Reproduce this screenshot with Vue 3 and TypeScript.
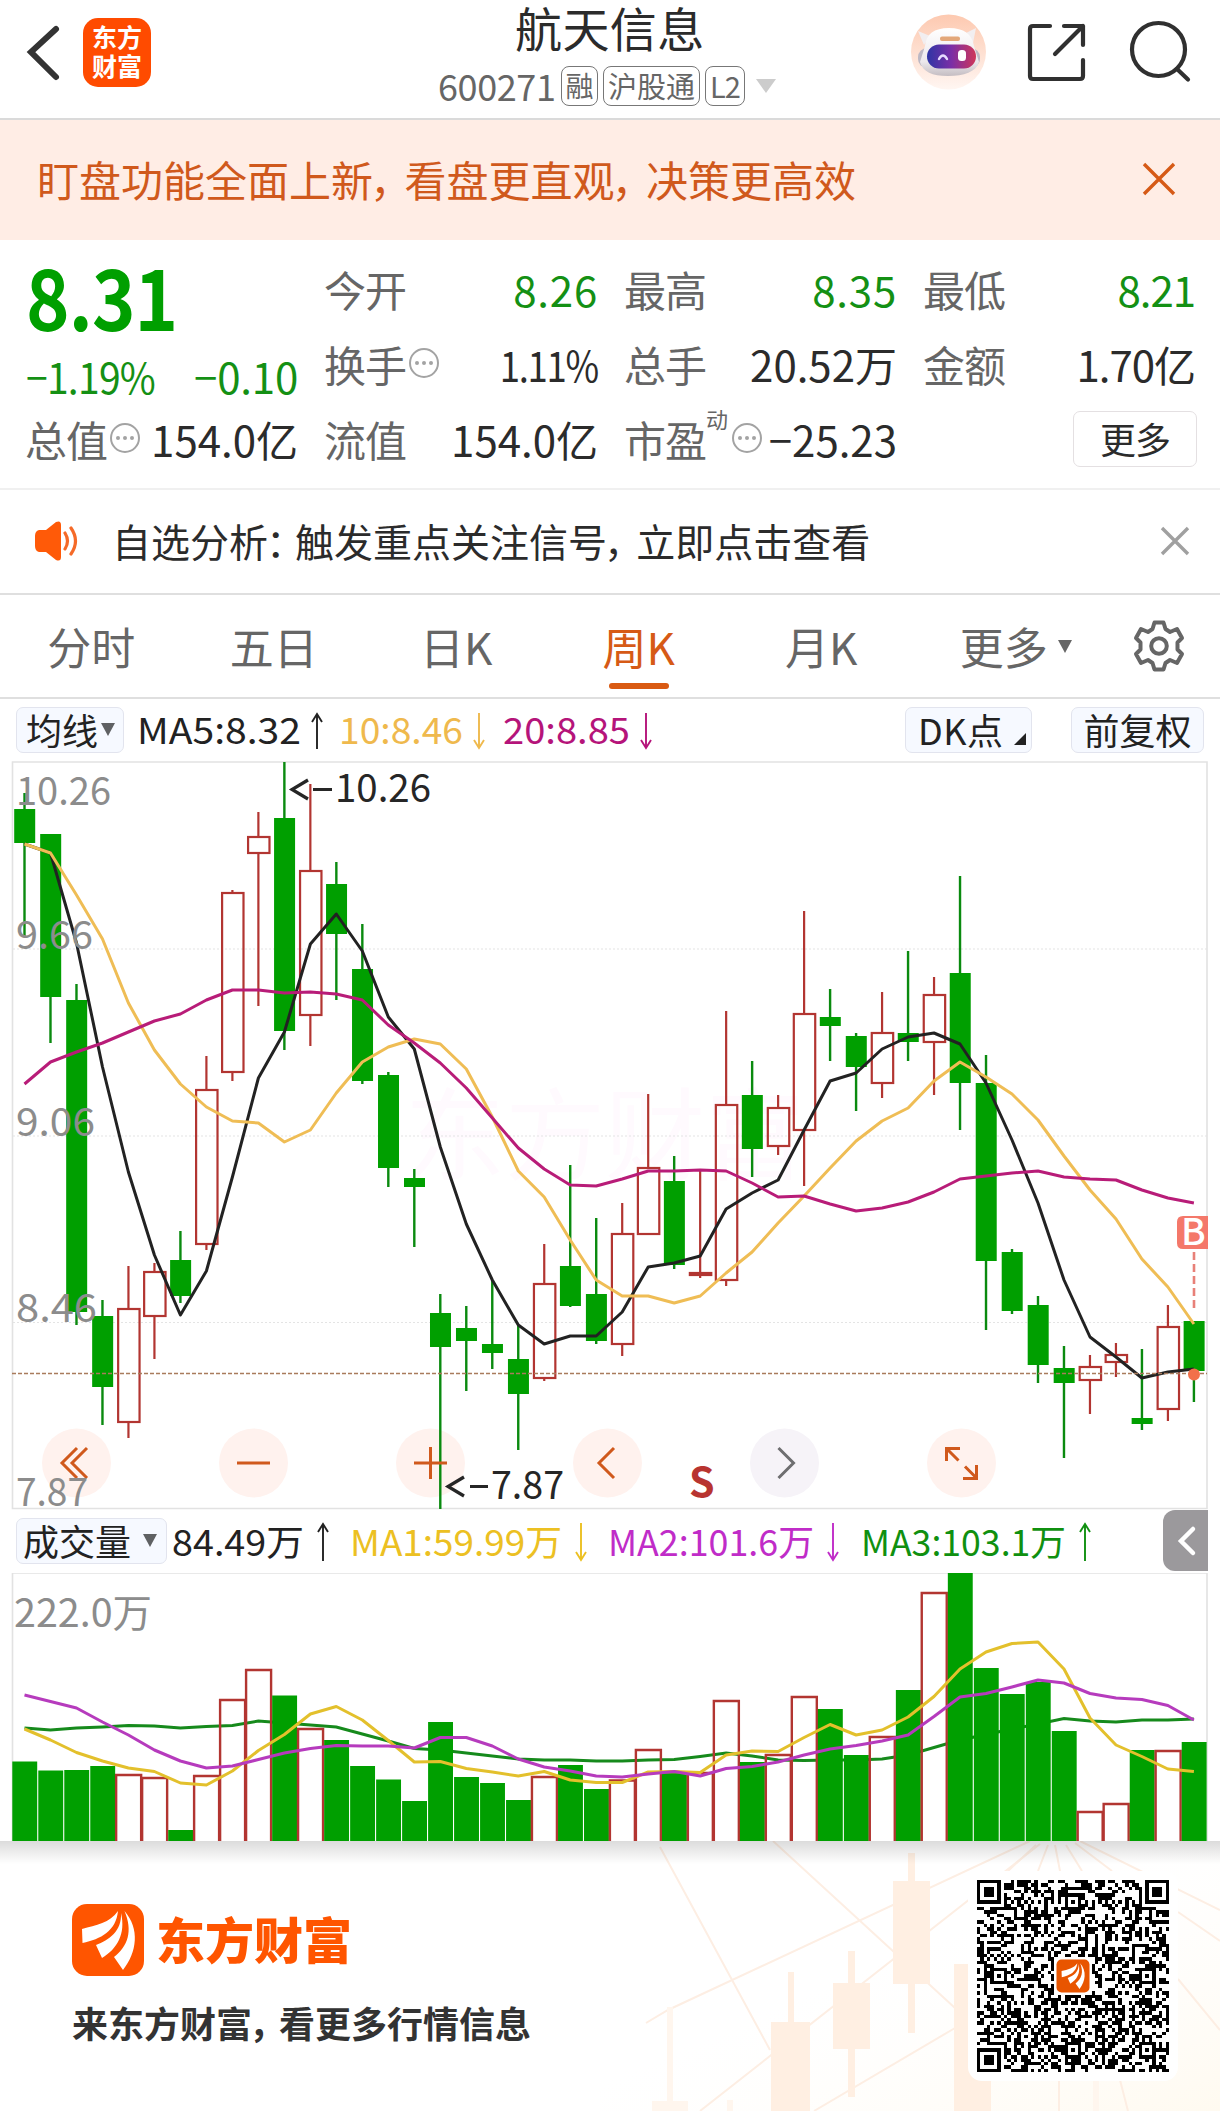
<script setup lang="ts">
/**
 * Stock detail page
 * Quote panel, weekly K-line chart and volume chart
 */

type Candle = [kind: "g" | "r", high: number, top: number, bottom: number, low: number];

interface Reading {
  text: string;
  color: string;
  width: number;
  textWidth: number;
  up: boolean;
}

const tabs = ["分时", "五日", "日K", "周K", "月K", "更多"];
const activeTab = "周K";

const STEP = 25.987;
const cx = (i: number) => 24.5 + i * STEP;

// high / body top / body bottom / low
const candles: Candle[] = [
  ["g", 793, 809, 843, 937], ["g", 834, 834, 997, 1043], ["g", 984, 1000, 1312, 1325],
  ["g", 1300, 1316, 1387, 1425], ["r", 1266, 1309, 1422, 1438], ["r", 1263, 1272, 1316, 1359],
  ["g", 1231, 1260, 1296, 1303], ["r", 1056, 1090, 1244, 1250], ["r", 890, 893, 1072, 1081],
  ["r", 812, 837, 853, 1006], ["g", 762, 818, 1031, 1050], ["r", 784, 871, 1015, 1046],
  ["g", 862, 884, 934, 1000], ["g", 924, 969, 1081, 1084], ["g", 1072, 1075, 1168, 1187],
  ["g", 1169, 1178, 1187, 1247], ["g", 1294, 1313, 1347, 1509], ["g", 1306, 1328, 1341, 1391],
  ["g", 1280, 1344, 1353, 1369], ["g", 1326, 1359, 1394, 1450], ["r", 1244, 1284, 1378, 1381],
  ["g", 1165, 1266, 1306, 1307], ["g", 1218, 1294, 1341, 1344], ["r", 1203, 1234, 1344, 1356],
  ["r", 1094, 1168, 1234, 1234], ["g", 1156, 1181, 1265, 1269], ["r", 1171, 1273, 1275, 1278],
  ["r", 1011, 1105, 1280, 1286], ["g", 1061, 1095, 1149, 1177], ["r", 1095, 1108, 1146, 1155],
  ["r", 911, 1014, 1130, 1186], ["g", 989, 1017, 1026, 1061], ["g", 1033, 1036, 1067, 1111],
  ["r", 992, 1033, 1083, 1098], ["g", 951, 1033, 1042, 1061], ["r", 977, 995, 1042, 1095],
  ["g", 876, 973, 1083, 1130], ["g", 1055, 1083, 1261, 1330], ["g", 1249, 1252, 1311, 1314],
  ["g", 1296, 1305, 1365, 1383], ["g", 1346, 1368, 1383, 1458], ["r", 1355, 1367, 1380, 1414],
  ["r", 1343, 1355, 1362, 1377], ["g", 1349, 1418, 1424, 1430], ["r", 1305, 1327, 1409, 1421],
  ["g", 1321, 1321, 1371, 1402]
];

const volumes = [
  1761.5, 1770.5, 1770, 1766, 1775, 1778, 1830, 1776, 1700, 1670, 1695.5, 1729, 1740, 1766, 1779.5,
  1801, 1722, 1777, 1783, 1800, 1777, 1765, 1789, 1780.5, 1750, 1772.5, 1773, 1701, 1762, 1755,
  1697, 1709, 1755, 1737, 1690, 1593, 1573, 1668, 1694, 1682, 1731, 1812, 1804, 1750, 1751, 1742
];

const ma5 = [
  844, 853, 943, 1067, 1172, 1255, 1315, 1271, 1177, 1078, 1032, 944, 914, 951, 1017, 1049, 1147,
  1224, 1280, 1325, 1344, 1336, 1336, 1312, 1267, 1263, 1256, 1209, 1193, 1180, 1130, 1081, 1073,
  1049, 1037, 1033, 1044, 1083, 1140, 1203, 1280, 1337, 1357, 1378, 1372, 1369
];
const ma10 = [
  844, 853, 895, 939, 1003, 1050, 1084, 1107, 1121, 1123, 1142, 1130, 1093, 1062, 1047, 1039, 1044,
  1069, 1117, 1171, 1197, 1240, 1280, 1296, 1296, 1303, 1296, 1273, 1252, 1223, 1196, 1168, 1141,
  1121, 1108, 1081, 1062, 1077, 1094, 1120, 1156, 1190, 1219, 1259, 1287, 1324
];
const ma20 = [
  1084, 1062, 1052, 1043, 1032, 1021, 1014, 1000, 990, 990, 993, 992, 994, 1000, 1025, 1043, 1063,
  1088, 1118, 1148, 1169, 1185, 1186, 1179, 1171, 1171, 1170, 1171, 1183, 1197, 1196, 1204, 1211,
  1208, 1202, 1192, 1179, 1176, 1173, 1171, 1177, 1179, 1180, 1190, 1198, 1203
];
const vol1 = [
  1729, 1740, 1752.5, 1761, 1768, 1771.5, 1783, 1785, 1771, 1750.5, 1734.5, 1714, 1706.5, 1720,
  1740.5, 1762, 1761.5, 1768.5, 1772, 1776, 1771.5, 1780, 1782.5, 1782.5, 1772, 1771.5, 1772.5,
  1755, 1751, 1751.5, 1737.5, 1724.5, 1735, 1730, 1717, 1696.5, 1669, 1652, 1643.5, 1642, 1669,
  1718, 1745, 1756.5, 1769, 1771.5
];
const vol2 = [
  1695, 1701.5, 1708, 1722, 1735, 1750, 1761, 1768, 1766, 1759.5, 1753, 1748.5, 1745.5, 1746, 1746,
  1748, 1737.5, 1737.5, 1746, 1759, 1767, 1771, 1776, 1777, 1774, 1771.5, 1776, 1768.5, 1766.5,
  1762, 1755, 1749, 1745.5, 1741, 1735, 1716.5, 1697, 1693.5, 1687, 1680, 1683, 1693.5, 1698,
  1699.5, 1705.5, 1720
];
const vol3 = [
  1728, 1730, 1728, 1727, 1725.5, 1726, 1728, 1726.5, 1725.5, 1721, 1723, 1725, 1727, 1734, 1741,
  1748.5, 1750, 1753, 1756, 1759, 1760, 1760, 1761, 1761, 1760, 1759.5, 1756.5, 1753, 1756, 1760,
  1760.5, 1760, 1760, 1759, 1755, 1747.5, 1740, 1734.5, 1729, 1724, 1718.5, 1721, 1722, 1720, 1720,
  1719
];

const toPoints = (ys: number[]) => ys.map((y, i) => `${cx(i).toFixed(1)},${y}`).join(" ");

const priceLines = [
  { points: toPoints(ma5), color: "#222222" },
  { points: toPoints(ma10), color: "#efbd55" },
  { points: toPoints(ma20), color: "#b81c78" }
];
// the long average is partly covered by the bars
const volumeLines = [
  { points: toPoints(vol1), color: "#e3c02c" },
  { points: toPoints(vol2), color: "#b63bbd" }
];
const longVolumeLine = toPoints(vol3);

const axisLabels = [
  { text: "10.26", y: 805, width: 92 },
  { text: "9.66", y: 949, width: 74 },
  { text: "9.06", y: 1136, width: 76 },
  { text: "8.46", y: 1322, width: 78 },
  { text: "7.87", y: 1506, width: 69 }
];

const priceReadings: Reading[] = [
  { text: "MA5:8.32", color: "#222222", width: 202, textWidth: 164, up: true },
  { text: "10:8.46", color: "#efb94d", width: 164, textWidth: 124, up: false },
  { text: "20:8.85", color: "#b5147a", width: 165, textWidth: 127, up: false }
];
const volumeReadings: Reading[] = [
  { text: "84.49万", color: "#222222", width: 178, textWidth: 132, up: true },
  { text: "MA1:59.99万", color: "#ecc022", width: 258, textWidth: 212, up: false },
  { text: "MA2:101.6万", color: "#c02cc8", width: 253, textWidth: 206, up: false },
  { text: "MA3:103.1万", color: "#109010", width: 240, textWidth: 205, up: true }
];

// QR code modules
const QR = 57;
const inFinder = (r: number, c: number) =>
  (r < 8 && c < 8) || (r < 8 && c > QR - 9) || (r > QR - 9 && c < 8);
const ring = (r: number, c: number, r0: number, c0: number, size: number) => {
  const d = Math.max(Math.abs(r - r0), Math.abs(c - c0));
  return size === 7 ? d === 3 || d <= 1 : d === 2 || d === 0;
};
const buildQr = () => {
  let seed = 60027;
  let path = "";
  const aligns = [6, 28, 50];
  for (let r = 0; r < QR; r++) {
    for (let c = 0; c < QR; c++) {
      seed = (seed * 1103515245 + 12345) % 2147483648;
      let on = seed / 2147483648 < 0.5;
      if (r === 6 || c === 6) on = (r + c) % 2 === 0;
      for (const ar of aligns) {
        for (const ac of aligns) {
          if (Math.abs(r - ar) <= 2 && Math.abs(c - ac) <= 2) on = ring(r, c, ar, ac, 5);
        }
      }
      if (inFinder(r, c)) {
        const r0 = r < 8 ? 3 : QR - 4;
        const c0 = c < 8 ? 3 : QR - 4;
        on = Math.abs(r - r0) <= 3 && Math.abs(c - c0) <= 3 && ring(r, c, r0, c0, 7);
      }
      if (Math.abs(r - 28) <= 5 && Math.abs(c - 28) <= 5) on = false;
      if (on) path += `M${c} ${r}h1v1h-1z`;
    }
  }
  return path;
};
const qrPath = buildQr();

const feathers =
  "M46 7C38 19 24 21 10 25L10.500 39C29 35 44 27 46 7Z M49 9C50 27 37 36 24 41L30 54C45 45 54 30 49 9Z M52.500 7C68 25 65 48 51 66L42 53C56 42 61 27 52.500 7Z";
</script>

<template>
  <div class="page">
    <header class="top-bar">
      <svg class="back" width="83" height="119" viewBox="0 0 83 119">
        <path d="M56 29 L31 52 L56 77" fill="none" stroke="#333" stroke-width="6" stroke-linecap="round" />
      </svg>
      <div class="app-mark"><span>东方</span><span>财富</span></div>
      <div class="stock">
        <div class="stock-name">航天信息</div>
        <div class="stock-sub">
          <span class="code">600271</span>
          <span class="badge rong">融</span>
          <span class="badge hgt">沪股通</span>
          <span class="badge l2">L2</span>
          <i class="caret"></i>
        </div>
      </div>
      <svg class="tools" width="310" height="119" viewBox="910 0 310 119">
        <defs>
          <linearGradient id="halo" x1="0" y1="0" x2="0" y2="1">
            <stop offset="0" stop-color="#fdc9b0" /><stop offset="1" stop-color="#fff6f2" />
          </linearGradient>
          <linearGradient id="visor" x1="0" y1="0" x2="1" y2="0">
            <stop offset="0" stop-color="#2e35a5" /><stop offset=".5" stop-color="#7b2fa6" /><stop offset="1" stop-color="#cf3659" />
          </linearGradient>
          <linearGradient id="shell" x1="0" y1="0" x2="0" y2="1">
            <stop offset="0" stop-color="#fff" /><stop offset=".7" stop-color="#ece8ec" /><stop offset="1" stop-color="#c4bdc2" />
          </linearGradient>
        </defs>
        <circle cx="948.500" cy="52" r="37.500" fill="url(#halo)" />
        <path d="M918 31l12 5-6 9zM976 28l-12 6 9 9z" fill="#f2eef0" />
        <rect x="918" y="48" width="62" height="20" rx="9" fill="#bdb8c4" />
        <path d="M925 46C926 34 934 28 949 28S972 34 974 46L979 62C976 72 964 76 948 76S923 72 920 62Z" fill="url(#shell)" />
        <rect x="940" y="36.500" width="20" height="4.500" rx="2" fill="#e3a779" />
        <rect x="927" y="44.500" width="49" height="24" rx="12" fill="url(#visor)" />
        <path d="M939 59q4-7 8 0" fill="none" stroke="#e8dcff" stroke-width="2.400" stroke-linecap="round" />
        <rect x="958" y="50" width="8" height="11" rx="3.500" fill="#fff" />
        <g fill="none" stroke="#303030" stroke-width="4.200" stroke-linecap="round" stroke-linejoin="round">
          <path d="M1050 26H1033q-3 0-3 3V76q0 3 3 3H1080q3 0 3-3V60M1064 26H1083V45M1083 26L1055 54" />
          <circle cx="1158.500" cy="49.500" r="26.500" />
          <path d="M1177 69L1188 79.500" />
        </g>
      </svg>
    </header>

    <section class="promo">
      <span>盯盘功能全面上新<i class="comma">，</i>看盘更直观<i class="comma">，</i>决策更高效</span>
      <svg width="34" height="34" viewBox="0 0 34 34">
        <path d="M2 2L32 32M32 2L2 32" stroke="#d65a16" stroke-width="3.400" />
      </svg>
    </section>

    <section class="quote">
      <div class="col first">
        <div class="price"><span>8.31</span></div>
        <div class="line change"><span class="pct">−1.19%</span><span class="diff">−0.10</span></div>
        <div class="line">
          <span class="label">总值</span><span class="dots"><i></i><i></i><i></i></span><b>154.0亿</b>
        </div>
      </div>
      <div class="col">
        <div class="line"><span class="label">今开</span><b class="down">8.26</b></div>
        <div class="line">
          <span class="label">换手</span><span class="dots"><i></i><i></i><i></i></span><b class="ones">1.11%</b>
        </div>
        <div class="line"><span class="label">流值</span><b>154.0亿</b></div>
      </div>
      <div class="col">
        <div class="line"><span class="label">最高</span><b class="down">8.35</b></div>
        <div class="line"><span class="label">总手</span><b>20.52万</b></div>
        <div class="line">
          <span class="label">市盈<sup>动</sup></span><span class="dots pe"><i></i><i></i><i></i></span><b>−25.23</b>
        </div>
      </div>
      <div class="col">
        <div class="line"><span class="label">最低</span><b class="down low">8.21</b></div>
        <div class="line"><span class="label">金额</span><b class="amount">1.70亿</b></div>
        <div class="line end"><button class="more">更多</button></div>
      </div>
    </section>

    <section class="notice">
      <svg class="horn" width="46" height="42" viewBox="0 0 46 42">
        <path d="M5 10H12L22 2Q27 0 27 5V37Q27 42 22 40L12 32H5Q1 31 1 26V16Q1 11 5 10Z" fill="#ff5a08" />
        <path d="M31 13q5 8 0 16M37 8q9 13 0 26" fill="none" stroke="#f56a28" stroke-width="3.200" stroke-linecap="round" />
      </svg>
      <span>自选分析<i class="colon">：</i>触发重点关注信号<i class="comma">，</i>立即点击查看</span>
      <svg class="close" width="30" height="30" viewBox="0 0 30 30">
        <path d="M2 2L28 28M28 2L2 28" stroke="#a0a0a0" stroke-width="3.400" />
      </svg>
    </section>

    <nav class="tabs">
      <div v-for="tab in tabs" :key="tab" class="tab" :class="{ active: tab === activeTab }">
        {{ tab }}<i v-if="tab === '更多'" class="caret"></i>
      </div>
      <svg class="gear" width="56" height="64" viewBox="-28 -32 56 64">
        <g fill="none" stroke="#666" stroke-width="4" stroke-linejoin="round">
          <path d="M-4.500 -23.500H4.500L6.500 -17L11 -14L18 -17L23 -8L18.500 -3.500V3.500L23 8L18 17L11 14L6.500 17L4.500 23.500H-4.500L-6.500 17L-11 14L-18 17L-23 8L-18.500 3.500V-3.500L-23 -8L-18 -17L-11 -14L-6.500 -17Z" />
          <circle r="7.800" />
        </g>
      </svg>
    </nav>

    <div class="readings">
      <div class="chip avg">均线<i class="caret"></i></div>
      <div v-for="item in priceReadings" :key="item.text" class="reading" :style="{ width: item.width + 'px' }">
        <svg :width="item.width" height="50">
          <text x="-1" y="37" :textLength="item.textWidth" lengthAdjust="spacingAndGlyphs" :fill="item.color">{{ item.text }}</text>
          <path :d="item.up ? 'M-5 12L0 4L5 12M0 4V39' : 'M-5 30L0 38L5 30M0 3V38'" :transform="`translate(${item.textWidth + 15} 3)`" fill="none" :stroke="item.color" stroke-width="1.900" />
        </svg>
      </div>
      <div class="chip dk">DK点<i class="corner"></i></div>
      <div class="chip fq">前复权</div>
    </div>

    <svg class="chart" width="1220" height="749" viewBox="0 761 1220 749">
      <text class="watermark" x="405" y="1172" textLength="400">东方财富</text>
      <g stroke="#e4e4e4" stroke-width="1.200" stroke-dasharray="2 2">
        <path d="M13 949H1207M13 1136H1207M13 1322.500H1207" />
      </g>
      <path d="M12.500 762H1207V1508.500H12.500Z" fill="none" stroke="#e2e2e2" stroke-width="1.600" />

      <g fill="#fff2ee">
        <circle cx="76.500" cy="1463" r="34.500" />
        <circle cx="253.500" cy="1463" r="34.500" />
        <circle cx="430.500" cy="1463" r="34.500" />
        <circle cx="607.500" cy="1463" r="34.500" />
        <circle cx="784.500" cy="1463" r="34.500" fill="#f6f3f8" />
        <circle cx="961.500" cy="1463" r="34.500" />
      </g>

      <g v-for="([kind, high, top, bottom, low], i) in candles" :key="i">
        <template v-if="kind === 'g'">
          <rect :x="cx(i) - 1.2" :y="high" width="2.400" :height="low - high" fill="#0a8a0f" />
          <rect :x="cx(i) - 10.300" :y="top" width="21" :height="bottom - top" fill="#009f00" />
        </template>
        <template v-else>
          <path :d="`M${cx(i)} ${high}V${top}M${cx(i)} ${bottom}V${low}`" stroke="#b23531" stroke-width="2.200" />
          <rect :x="cx(i) - 10.300" :y="top" width="21.400" :height="bottom - top" fill="none" stroke="#b23531" stroke-width="2.200" />
        </template>
      </g>

      <polyline v-for="line in priceLines" :key="line.color" :points="line.points" fill="none" :stroke="line.color" stroke-width="3" stroke-linejoin="round" />
      <path d="M12 1373.500H1207" stroke="#a97b5c" stroke-width="1.400" stroke-dasharray="4 2" />

      <g fill="none" stroke="#d0591c" stroke-width="3">
        <path d="M77 1448L62 1463L77 1478M87 1448L72 1463L87 1478" />
        <path d="M237 1463H270M414 1463H447M430.500 1447V1479" />
        <path d="M614 1448L599 1463L614 1478" />
        <path d="M778.500 1448L793.500 1463L778.500 1478" stroke="#6e6e70" />
        <path d="M946.500 1461V1448.500H960M947 1449L958.500 1460.500M965 1466.500L976.500 1478M963 1478.500H976.500V1465" />
      </g>

      <g fill="#8c8c8c" font-size="39">
        <text v-for="label in axisLabels" :key="label.text" x="16" :y="label.y" :textLength="label.width + 3" lengthAdjust="spacingAndGlyphs">{{ label.text }}</text>
      </g>
      <g fill="#262626" font-size="39">
        <text x="335" y="802" textLength="96" lengthAdjust="spacingAndGlyphs">10.26</text>
        <text x="491" y="1499" textLength="73" lengthAdjust="spacingAndGlyphs">7.87</text>
      </g>
      <path d="M308 780L292 789.500L308 799M313 789.500H332M464 1477L448 1486.500L464 1496M470 1486.500H488" fill="none" stroke="#262626" stroke-width="3.200" />

      <text class="sell" x="689" y="1497">S</text>
      <path d="M1208 1216H1183q-6 0-6 6v21q0 6 6 6h25z" fill="#f4786a" />
      <text class="buy" x="1181" y="1245">B</text>
      <path d="M1194 1252V1309" stroke="#e88078" stroke-width="2.600" stroke-dasharray="8 4" />
      <circle cx="1194" cy="1374.500" r="6" fill="#f2704a" />
    </svg>

    <div class="readings volume">
      <div class="chip vol">成交量<i class="caret"></i></div>
      <div v-for="item in volumeReadings" :key="item.text" class="reading" :style="{ width: item.width + 'px' }">
        <svg :width="item.width" height="50">
          <text x="-1" y="38" :textLength="item.textWidth" lengthAdjust="spacingAndGlyphs" :fill="item.color">{{ item.text }}</text>
          <path :d="item.up ? 'M-5 12L0 4L5 12M0 4V41' : 'M-5 32L0 40L5 32M0 3V40'" :transform="`translate(${item.textWidth + 18} 2)`" fill="none" :stroke="item.color" stroke-width="1.900" />
        </svg>
      </div>
      <div class="drawer">
        <svg width="44" height="61" viewBox="0 0 44 61">
          <path d="M30 19L18 31L30 43" fill="none" stroke="#fff" stroke-width="4.500" stroke-linecap="round" />
        </svg>
      </div>
    </div>

    <svg class="chart" width="1220" height="268" viewBox="0 1573 1220 268">
      <path d="M12.500 1841V1573H1207V1841" fill="none" stroke="#e2e2e2" stroke-width="1.600" />
      <text x="14" y="1627" font-size="39" fill="#8c8c8c" textLength="138" lengthAdjust="spacingAndGlyphs">222.0万</text>
      <polyline :points="longVolumeLine" fill="none" stroke="#168a1c" stroke-width="3" />
      <template v-for="(top, i) in volumes" :key="i">
        <rect v-if="candles[i][0] === 'g'" :x="cx(i) - 12.2" :y="top" width="24.900" :height="1841 - top" fill="#009f00" />
        <path v-else :d="`M${cx(i) - 12.3} 1841V${top}H${cx(i) + 12.7}V1841`" fill="none" stroke="#b23531" stroke-width="2.400" />
      </template>
      <polyline v-for="line in volumeLines" :key="line.color" :points="line.points" fill="none" :stroke="line.color" stroke-width="3" stroke-linejoin="round" />
    </svg>

    <footer class="brand">
      <svg class="brand-bg" width="1220" height="270" viewBox="0 1841 1220 270">
        <defs>
          <linearGradient id="warm" x1="0" y1="0" x2="1" y2="1">
            <stop offset=".45" stop-color="#fffdfa" stop-opacity="0" /><stop offset="1" stop-color="#fffaf0" />
          </linearGradient>
          <linearGradient id="shade" x1="0" y1="0" x2="0" y2="1">
            <stop offset="0" stop-color="#000" stop-opacity=".14" /><stop offset="1" stop-color="#000" stop-opacity="0" />
          </linearGradient>
        </defs>
        <rect x="600" y="1841" width="620" height="270" fill="url(#warm)" />
        <g fill="none" stroke="#fdeee3" stroke-width="2">
          <path d="M660 1847L770 2050M773 1841L955 2008M1030 1841L668 2010L646 2023M1040 1844L700 2111M814 2111L955 2028" />
          <path d="M1036 1845L1008 1871M1048 1845L1038 1871M1055 1845L1060 1871M1066 1845L1082 1871M1075 1843L1112 1871M1080 1841L1220 1910M1178 1912L1220 1941M1178 1979L1220 2030M1059 2080V2111M1120 2080L1128 2111" />
        </g>
        <g fill="#ffefe2">
          <path d="M893 1881h37v103h-37zM908 1853h7v28h-7zM908 1984h7v49h-7zM833 1983h37v66h-37zM848 1951h7v32h-7zM848 2049h7v48h-7zM771 2022h39v89h-39zM788 1972h6v50h-6zM954 1964h37v147h-37z" />
          <path d="M652 2101h36v10h-36zM667 2007h6v94h-6zM727 2100h6v11h-6zM1093 2080h6v31h-6z" fill="#fff6ee" />
        </g>
        <rect x="0" y="1841" width="1220" height="23" fill="url(#shade)" />
      </svg>
      <div class="brand-text">
        <div class="brand-name">
          <svg width="72" height="72" viewBox="0 0 72 72">
            <rect width="72" height="72" rx="15" fill="#ff5500" />
            <path :d="feathers" fill="#fff" />
          </svg>
          <span>东方财富</span>
        </div>
        <div class="slogan">来东方财富<i class="comma">，</i>看更多行情信息</div>
      </div>
      <div class="qr">
        <svg width="192" height="192" viewBox="0 0 57 57">
          <path :d="qrPath" shape-rendering="crispEdges" />
          <rect x="23.600" y="23.600" width="9.800" height="9.800" rx="1.500" fill="#e85500" />
          <path :d="feathers" fill="#fff" transform="translate(23.800 23.800) scale(.13)" />
        </svg>
      </div>
    </footer>
  </div>
</template>

<style>
body {
  margin: 0;
  background: #fff;
}
</style>

<style scoped>
.page {
  width: 1220px;
  height: 2111px;
  overflow: hidden;
  background: #fff;
  color: #2b2b2b;
  font-family: "Noto Sans CJK SC", "Noto Sans", sans-serif;
}

.page * {
  box-sizing: border-box;
}

svg {
  display: block;
  flex: none;
}

i {
  font-style: normal;
}

.caret {
  width: 0;
  height: 0;
  border: solid transparent;
  border-width: 14px 10.5px 0;
  border-top-color: #ccc;
}

/* header */
.top-bar {
  height: 120px;
  display: flex;
  border-bottom: 2px solid #dadada;
}

.app-mark {
  width: 68px;
  height: 69px;
  margin-top: 18px;
  padding-bottom: 3px;
  display: flex;
  flex-direction: column;
  align-items: center;
  justify-content: center;
  border-radius: 15px;
  background: #ff4b00;
  color: #fff;
  font-size: 25px;
  font-weight: 700;
  line-height: 29px;
}

.stock {
  width: 759px;
  padding-left: 287px;
}

.stock-name {
  padding-left: 77px;
  height: 62px;
  font-size: 47px;
  line-height: 53px;
  letter-spacing: 0.4px;
}

.stock-sub {
  display: flex;
  align-items: center;
  height: 48px;
  color: #666;
}

.code {
  width: 123px;
  font-size: 36px;
  line-height: 46px;
  letter-spacing: -0.4px;
  margin-top: -2px;
}

.badge {
  height: 40px;
  margin-right: 5px;
  border: 1.5px solid #777;
  border-radius: 8px;
  font-size: 29px;
  line-height: 36px;
  text-align: center;
  white-space: nowrap;
}

.rong {
  width: 37px;
  font-size: 28px;
}

.hgt {
  width: 97px;
}

.l2 {
  width: 40px;
  letter-spacing: -1px;
}

.stock-sub .caret {
  margin-left: 6px;
}

/* promo banner */
.promo {
  height: 120px;
  padding: 0 44px 3px 37px;
  display: flex;
  align-items: center;
  justify-content: space-between;
  background: #ffede5;
  color: #d0591c;
  font-size: 42px;
}

.comma {
  position: relative;
  left: -3px;
  letter-spacing: -0.25em;
}

/* quote */
.quote {
  height: 250px;
  padding: 11px 25px 0 26px;
  display: grid;
  grid-template-columns: 272px 273px 272px 271px;
  column-gap: 27px;
  border-bottom: 2px solid #f0f0f0;
}

.line {
  height: 75px;
  display: flex;
  align-items: center;
  font-size: 42px;
  white-space: nowrap;
}

.line b {
  margin-left: auto;
  font-weight: 400;
}

.label {
  position: relative;
  left: -1px;
  color: #666;
  letter-spacing: -1px;
}

.line .down {
  color: #149014;
  letter-spacing: 0.8px;
}

.line .low {
  letter-spacing: -1px;
}

.line .ones {
  letter-spacing: -1.5px;
  transform: scaleX(0.87);
  transform-origin: 100% 0;
}

.line .amount {
  letter-spacing: -1px;
}

.price {
  height: 75px;
  color: #009f00;
  font-size: 84px;
  font-weight: 700;
  line-height: 88px;
  letter-spacing: -1px;
}

.price span {
  display: inline-block;
  transform: scaleX(0.88);
  transform-origin: 0 0;
}

.change {
  padding-top: 23px;
  justify-content: space-between;
  color: #149014;
}

.pct {
  letter-spacing: -0.8px;
  transform: scaleX(0.93);
  transform-origin: 0 0;
}

.diff {
  letter-spacing: -0.2px;
}

.dots {
  width: 30px;
  height: 30px;
  margin: -2px 0 0 2px;
  display: flex;
  align-items: center;
  justify-content: center;
  gap: 3px;
  border: 2.4px solid #a3a3a3;
  border-radius: 50%;
}

.dots i {
  width: 4px;
  height: 4px;
  border-radius: 50%;
  background: #a3a3a3;
}

.pe {
  margin-left: 25px;
}

sup {
  position: absolute;
  left: 82px;
  top: -1px;
  font-size: 22px;
  line-height: 1;
}

.end {
  justify-content: flex-end;
}

.more {
  width: 124px;
  height: 56px;
  margin: 1px -2px 0 0;
  padding: 0 0 2px;
  border: 1.5px solid #e4e0e2;
  border-radius: 7px;
  background: #fff;
  color: #2b2b2b;
  font: inherit;
  font-size: 36px;
  line-height: 50px;
  letter-spacing: -1px;
}

/* notice */
.notice {
  height: 105px;
  padding-left: 34px;
  display: flex;
  align-items: center;
  border-bottom: 2px solid #dfdfdf;
  font-size: 39px;
}

.horn {
  margin-top: -2px;
}

.notice span {
  margin: -4px 0 0 32px;
}

.notice .colon {
  position: relative;
  left: -2px;
  letter-spacing: -12px;
}

.close {
  margin: -2px 30px 0 auto;
}

/* tabs */
.tabs {
  height: 104px;
  display: flex;
  align-items: center;
  border-bottom: 2px solid #dfdfdf;
  color: #666;
}

.tab {
  position: relative;
  width: 182.5px;
  height: 102px;
  font-size: 44px;
  line-height: 102px;
  text-align: center;
}

.tab.active {
  color: #d65a16;
}

.tab.active::after {
  content: "";
  position: absolute;
  left: 61px;
  bottom: 8px;
  width: 60px;
  height: 6px;
  border-radius: 3px;
  background: #d95a12;
}

.tab .caret {
  position: absolute;
  left: 145px;
  top: 45px;
  border-width: 13px 7.5px 0;
  border-top-color: #666;
}

.gear {
  margin: 0 0 0 36px;
}

/* indicator rows */
.readings {
  height: 62px;
  padding: 8px 0 0 16px;
  display: flex;
  font-size: 36px;
}

.chip {
  height: 46px;
  display: flex;
  align-items: center;
  border: 1.5px solid #e2e4ee;
  border-radius: 7px;
  background: #f6f9ff;
  color: #222;
  white-space: nowrap;
  line-height: 40px;
  padding-bottom: 2px;
}

.chip .caret {
  border-width: 13px 7.5px 0;
  border-top-color: #5f6163;
}

.avg {
  width: 108px;
  margin-right: 14px;
  padding-left: 9px;
}

.avg .caret {
  margin-left: 3px;
}

.dk {
  width: 127px;
  margin-left: 236px;
  padding-left: 12px;
  letter-spacing: 0.5px;
}

.corner {
  margin: 20px 0 0 10px;
  border: solid transparent;
  border-width: 0 0 12px 12px;
  border-bottom-color: #222;
}

.fq {
  width: 133px;
  margin-left: 39px;
  justify-content: center;
}

.volume {
  height: 63px;
}

.vol {
  width: 151px;
  margin-right: 6px;
  padding-left: 6px;
}

.vol .caret {
  margin-left: 12px;
}

.drawer {
  width: 45px;
  height: 61px;
  margin: -8px 12px 0 auto;
  border-radius: 12px 0 0 12px;
  background: #9b999c;
}

.reading {
  flex: none;
}

.reading svg {
  overflow: visible;
}

/* charts */
.watermark {
  font-size: 100px;
  font-weight: 400;
  fill: #fffafe;
}

.sell {
  font-size: 41px;
  font-weight: 700;
  fill: #b83430;
}

.buy {
  font-size: 37px;
  font-weight: 500;
  fill: #fff;
}

/* footer */
.brand {
  position: relative;
  height: 270px;
  display: flex;
  justify-content: space-between;
  padding: 30px 42px 0 72px;
}

.brand-bg {
  position: absolute;
  left: 0;
  top: 0;
}

.brand-text {
  position: relative;
  padding-top: 33px;
}

.brand-name {
  display: flex;
  gap: 12px;
  color: #ff5500;
  font-size: 49px;
  font-weight: 900;
  line-height: 67px;
}

.slogan {
  margin-top: 20px;
  color: #333;
  font-size: 36px;
  font-weight: 700;
}

.qr {
  position: relative;
  width: 210px;
  height: 210px;
  padding: 9px;
  border-radius: 14px;
  background: #fff;
}
</style>
